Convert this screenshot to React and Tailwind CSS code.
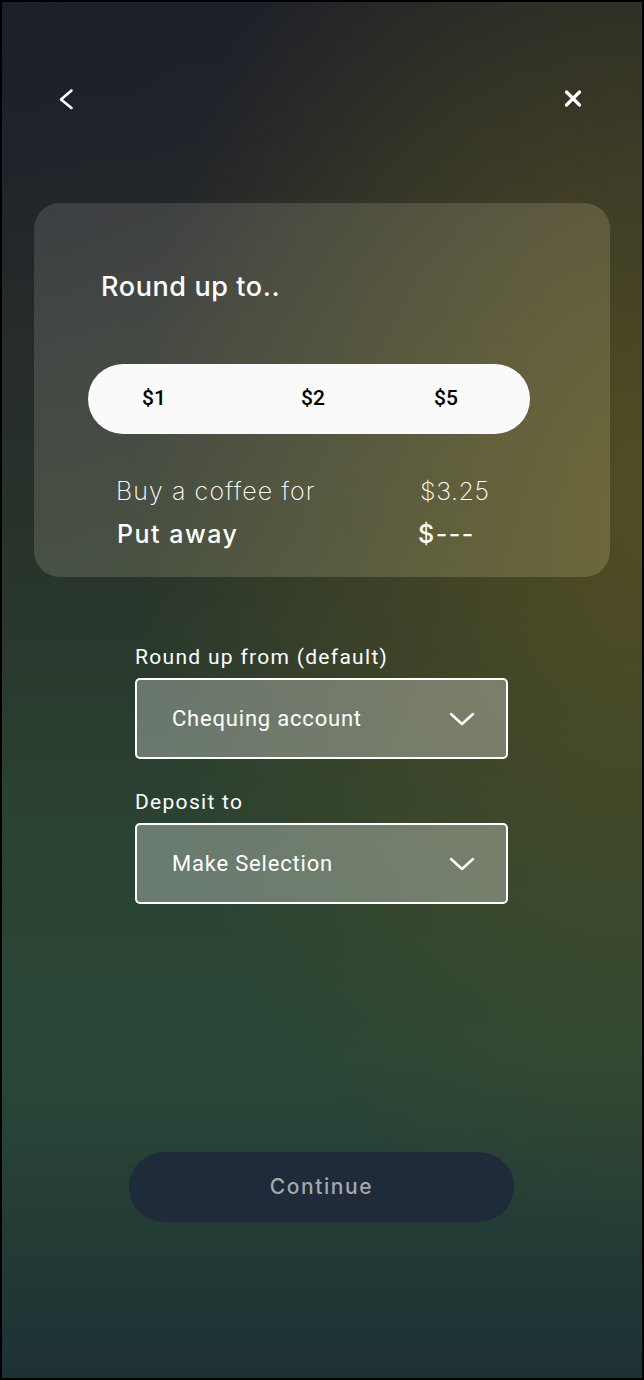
import React from "react";

const work = "font-['Inter','Liberation_Sans',sans-serif]";
const roboto = "font-['Roboto','Liberation_Sans',sans-serif]";

function ChevronDown() {
  return (
    <svg width="26" height="14" viewBox="0 0 26 14" fill="none" stroke="white" strokeWidth="2.5" strokeLinecap="round" strokeLinejoin="round">
      <polyline points="2,2 13,12 24,2" />
    </svg>
  );
}

function Select({ label, value, first }) {
  return (
    <div className={first ? "" : "mt-[31px]"}>
      <div className={`${roboto} text-[21px] leading-[24px] text-white tracking-[1.3px]`}>{label}</div>
      <div className="mt-[9px] h-[81px] flex items-center justify-between border-2 border-white rounded-[5px] bg-white/30 pl-[35px] pr-[31px]">
        <span className={`${roboto} text-[22px] font-normal text-white tracking-[0.8px]`}>{value}</span>
        <ChevronDown />
      </div>
    </div>
  );
}

export default function App() {
  return (
    <div className="w-[644px] h-[1380px] border-2 border-black overflow-hidden bg-[radial-gradient(ellipse_80%_55%_at_100%_36%,rgba(86,80,34,0.9),transparent),radial-gradient(ellipse_70%_25%_at_0%_0%,rgba(28,31,40,0.9),transparent),linear-gradient(180deg,#1e2128_0%,#25282a_15%,#28322a_38%,#2a4231_60%,#294737_77%,#1e3134_100%)]">
      {/* header */}
      <div className="flex justify-between items-start pt-[85px] pl-[52px] pr-[57px]">
        <svg width="24" height="24" viewBox="0 0 24 24" fill="none" stroke="white" strokeWidth="2.6" strokeLinecap="round" strokeLinejoin="round">
          <polyline points="17.5,3.5 7,12.5 17.5,21" />
        </svg>
        <svg width="24" height="24" viewBox="0 0 24 24" fill="none" stroke="white" strokeWidth="3.2" strokeLinecap="round">
          <line x1="5.5" y1="5" x2="18.5" y2="18" />
          <line x1="18.5" y1="5" x2="5.5" y2="18" />
        </svg>
      </div>

      {/* card */}
      <div className="mt-[92px] ml-[32px] w-[576px] rounded-[26px] bg-[linear-gradient(135deg,rgba(255,255,255,0.12),rgba(230,220,150,0.2))] pt-[68px] pb-[27px]">
        <div className={`${work} pl-[67px] text-[27px] leading-[32px] font-medium tracking-[0.6px] text-white`}>Round up to..</div>
        <div className={`${roboto} relative mt-[61px] ml-[54px] w-[442px] h-[70px] rounded-full bg-[#fafafa] text-[21px] font-medium text-black`}>
          <span className="absolute top-1/2 -translate-y-1/2 left-[54px]">$1</span>
          <span className="absolute top-1/2 -translate-y-1/2 left-[213px]">$2</span>
          <span className="absolute top-1/2 -translate-y-1/2 left-[346px]">$5</span>
        </div>
        <div className={`${work} mt-[41px] pl-[82px] flex text-white text-[25px] leading-[32px] tracking-[1.1px]`}>
          <span className="w-[304px] font-extralight">Buy a coffee for</span>
          <span className="font-extralight tracking-[0.6px]">$3.25</span>
        </div>
        <div className={`${work} mt-[11px] pl-[83px] flex text-white text-[25px] leading-[32px] font-medium tracking-[1.5px]`}>
          <span className="w-[301px]">Put away</span>
          <span>$---</span>
        </div>
      </div>

      {/* form */}
      <div className="mt-[68px] ml-[133px] w-[373px]">
        <Select first label="Round up from (default)" value="Chequing account" />
        <Select label="Deposit to" value="Make Selection" />
      </div>

      {/* continue */}
      <div className="mt-[248px] ml-[127px] w-[385px] h-[70px] rounded-full bg-[#1f2a3a] flex items-center justify-center">
        <span className={`${work} text-[21px] font-medium text-[#a3a8ad] tracking-[1.6px]`}>Continue</span>
      </div>
    </div>
  );
}
